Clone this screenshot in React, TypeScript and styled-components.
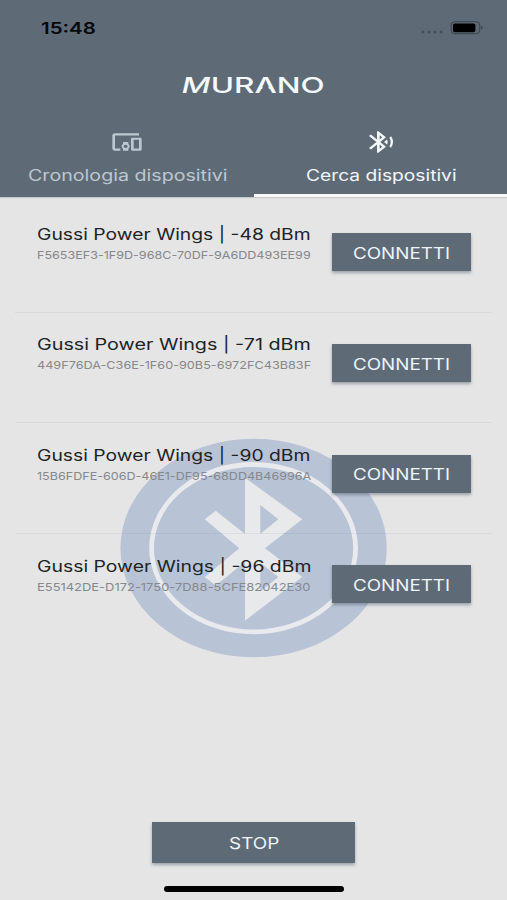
import React, { useLayoutEffect, useRef, useState } from "react";
import styled, { createGlobalStyle } from "styled-components";
import { MdBluetoothSearching, MdDevicesOther } from "react-icons/md";

const slate = "#5e6b77";

const GlobalStyle = createGlobalStyle`
  * { box-sizing: border-box; }
  body { margin: 0; font-family: "Inter", "Liberation Sans", sans-serif; }
`;

const Screen = styled.div`
  position: relative;
  isolation: isolate;
  display: flex;
  flex-direction: column;
  width: 507px;
  height: 900px;
  background: #e5e5e5;
  overflow: hidden;
`;

const Header = styled.header`
  display: flex;
  flex-direction: column;
  height: 197px;
  background: ${slate};
  box-shadow: 0 1px 1px rgba(0, 0, 0, 0.12);
`;

const StatusBar = styled.div`
  display: flex;
  align-items: center;
  justify-content: space-between;
  height: 55px;
  padding: 0 23px 0 41px;
`;

const StatusIcons = styled.div`
  display: flex;
  width: 64px;
  height: 16px;
`;

const Brand = styled.div`
  display: flex;
  align-items: center;
  justify-content: center;
  height: 58px;
  padding-top: 1px;
`;

const SlantedLetter = styled.span`
  display: inline-block;
  transform: skewX(-9deg);
`;

const OpenLetter = styled.span`
  position: relative;
  display: inline-block;
  &::after {
    content: "";
    position: absolute;
    left: 4.4px;
    right: 4.4px;
    top: 14px;
    height: 6px;
    background: ${slate};
    clip-path: polygon(24% 0, 76% 0, 100% 100%, 0 100%);
  }
`;

const Tabs = styled.nav`
  display: grid;
  grid-template-columns: 1fr 1fr;
  height: 84px;
`;

const Tab = styled.button<{ $active?: boolean }>`
  display: flex;
  flex-direction: column;
  align-items: center;
  padding: 16px 0 0 1px;
  border: 0;
  border-bottom: 3px solid ${(p) => (p.$active ? "#f7f9fb" : "transparent")};
  background: none;
  color: ${(p) => (p.$active ? "#f2f7fb" : "#bdc7d0")};
  font-family: inherit;
  gap: 11px;
  svg {
    width: 32px;
    height: 26px;
  }
`;

const List = styled.ul`
  display: flex;
  flex-direction: column;
  margin: 0;
  padding: 5px 15px 0;
  list-style: none;
`;

const Row = styled.li`
  display: flex;
  align-items: flex-start;
  justify-content: space-between;
  height: 110.7px;
  padding: 22px 21px 0 22px;
  border-bottom: 1px solid rgba(80, 90, 100, 0.08);
  &:last-child { border-bottom-color: transparent; }
`;

const DeviceInfo = styled.div`
  display: flex;
  flex-direction: column;
  padding-top: 0.6px;
`;

const ActionButton = styled.button<{ $wide?: boolean }>`
  display: flex;
  align-items: center;
  justify-content: center;
  width: ${(p) => (p.$wide ? 203 : 139)}px;
  height: ${(p) => (p.$wide ? 41 : 38)}px;
  margin-top: ${(p) => (p.$wide ? 0 : 9.4)}px;
  padding: ${(p) => (p.$wide ? 2 : 3)}px 0 0;
  border: 0;
  background: ${slate};
  color: #edf4fa;
  font-family: inherit;
  box-shadow: 0 2px 3px rgba(50, 65, 80, 0.4);
`;

const Footer = styled.footer`
  display: flex;
  flex-direction: column;
  align-items: center;
  gap: 23px;
  margin-top: auto;
  padding-bottom: 8.5px;
`;

const HomeIndicator = styled.div`
  width: 180px;
  height: 5.5px;
  border-radius: 3px;
  background: #000;
`;

const Watermark = styled.svg`
  position: absolute;
  z-index: -1;
  left: 120px;
  top: 438px;
  width: 267px;
  height: 220px;
`;

type TextProps = { $size: number; $weight?: number; $color?: string; $line?: number };

const TextBox = styled.span<TextProps>`
  display: block;
  text-align: left;
  font-size: ${(p) => p.$size}px;
  font-weight: ${(p) => p.$weight ?? 400};
  line-height: ${(p) => p.$line ?? 20}px;
  color: ${(p) => p.$color ?? "inherit"};
  white-space: nowrap;
`;

const TextRun = styled.span`
  display: inline-block;
  transform-origin: 0 50%;
`;

function WideText({ width, children, ...text }: TextProps & { width: number; children: React.ReactNode }) {
  const run = useRef<HTMLSpanElement>(null);
  const [scale, setScale] = useState(1);
  useLayoutEffect(() => {
    if (run.current) setScale(width / run.current.offsetWidth);
  }, [width]);
  return (
    <TextBox {...text} style={{ width }}>
      <TextRun ref={run} style={{ transform: `scaleX(${scale})` }}>{children}</TextRun>
    </TextBox>
  );
}

const devices = [
  { dbm: -48, id: "F5653EF3-1F9D-968C-70DF-9A6DD493EE99" },
  { dbm: -71, id: "449F76DA-C36E-1F60-90B5-6972FC43B83F" },
  { dbm: -90, id: "15B6FDFE-606D-46E1-DF95-68DD4B46996A" },
  { dbm: -96, id: "E55142DE-D172-1750-7D88-5CFE82042E30" },
];

export default function App() {
  return (
    <>
      <GlobalStyle />
      <Screen>
        <Watermark viewBox="120 438 267 220" aria-hidden>
          <ellipse cx="253.6" cy="548" rx="133.2" ry="109.3" fill="#b9c3d6" />
          <ellipse cx="253.6" cy="548.2" rx="102" ry="83.7" fill="none" stroke="#e8eaed" strokeWidth="4.8" />
          <path
            fill="#e8e9eb"
            fillRule="evenodd"
            d="M245 477.7 302.3 519.3 265 548.3 302.3 577 245 620.7V562L215.7 585.5 204.7 577 239.3 548.3 204.7 519.3 215.7 510.7 245 534ZM260.3 505V534L278.3 519.3ZM260.3 562.7V591.5L278.3 577Z"
          />
        </Watermark>
        <Header>
          <StatusBar>
            <WideText width={55} $size={16} $weight={600} $color="#05090d">15:48</WideText>
            <StatusIcons>
              <svg width="64" height="16" viewBox="420 19.5 64 16" aria-hidden>
                <g fill="#414d59">
                  <circle cx="423" cy="31.5" r="1.5" />
                  <circle cx="429" cy="31.5" r="1.5" />
                  <circle cx="435" cy="31.5" r="1.5" />
                  <circle cx="441" cy="31.5" r="1.5" />
                </g>
                <rect x="451.2" y="21.2" width="28.6" height="12" rx="3.5" fill="none" stroke="#37424c" />
                <rect x="453" y="22.9" width="22.4" height="8.8" rx="1.8" />
                <path d="M481.2 25.2q2.8 2 0 4Z" fill="#37424c" />
              </svg>
            </StatusIcons>
          </StatusBar>
          <Brand>
            <WideText width={143} $size={22} $weight={500} $line={24} $color="#f4f9fd">
              <SlantedLetter>M</SlantedLetter>UR<OpenLetter>A</OpenLetter>NO
            </WideText>
          </Brand>
          <Tabs>
            <Tab>
              <MdDevicesOther preserveAspectRatio="none" />
              <WideText width={199} $size={15.5}>Cronologia dispositivi</WideText>
            </Tab>
            <Tab $active>
              <MdBluetoothSearching preserveAspectRatio="none" />
              <WideText width={150} $size={15.5}>Cerca dispositivi</WideText>
            </Tab>
          </Tabs>
        </Header>
        <List>
          {devices.map((d) => (
            <Row key={d.id}>
              <DeviceInfo>
                <WideText width={274} $size={15.5} $color="#202326">{`Gussi Power Wings | ${d.dbm} dBm`}</WideText>
                <WideText width={274} $size={11} $color="#85888c">{d.id}</WideText>
              </DeviceInfo>
              <ActionButton>
                <WideText width={97} $size={15.5}>CONNETTI</WideText>
              </ActionButton>
            </Row>
          ))}
        </List>
        <Footer>
          <ActionButton $wide>
            <WideText width={50} $size={15.5}>STOP</WideText>
          </ActionButton>
          <HomeIndicator />
        </Footer>
      </Screen>
    </>
  );
}
